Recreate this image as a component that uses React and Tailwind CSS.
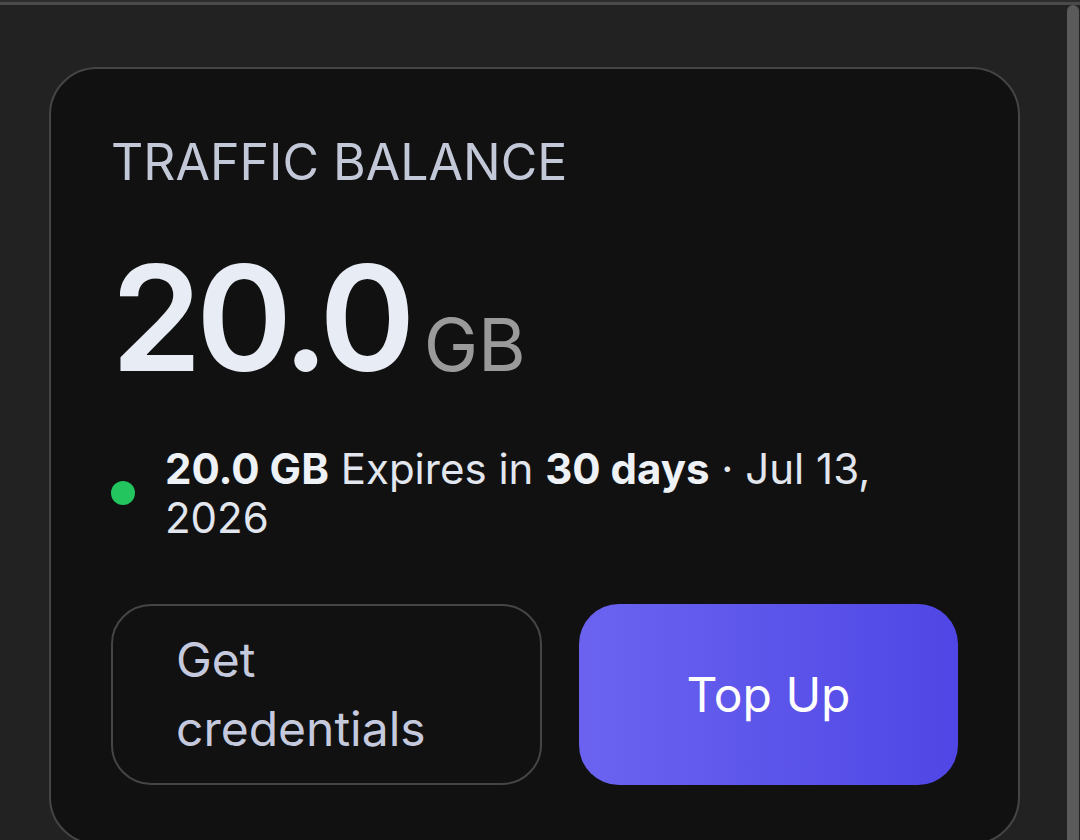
import React from "react";

function StatusLine() {
  return (
    <div className="flex items-center gap-[30px]">
      <span className="w-6 h-6 shrink-0 rounded-full bg-[#22c55e]" />
      <p className="text-[42px] leading-[49px] text-[#e2e6ee]">
        <span className="font-bold text-[#eef1f6]">20.0 GB</span> Expires in{" "}
        <span className="font-bold text-[#eef1f6]">30 days</span> · Jul 13, 2026
      </p>
    </div>
  );
}

function BalanceCard() {
  return (
    <div className="w-[971px] ml-[49px] mt-[62px] shrink-0 rounded-[48px] border-2 border-[#454545] bg-[#111111] px-[60px] pt-[63px] pb-[58px]">
      <div className="text-[50px] leading-[60px] text-[#c3c8d8]">TRAFFIC BALANCE</div>

      <div className="flex items-baseline mt-[53px]">
        <span className="text-[146px] leading-[146px] font-semibold tracking-[-0.04em] text-[#e8edf5]">
          20.0
        </span>
        <span className="ml-[14px] text-[73px] leading-none text-[#9a9a9a]">GB</span>
      </div>

      <div className="mt-[53px]">
        <StatusLine />
      </div>

      <div className="flex gap-[37px] mt-[62px]">
        <button
          type="button"
          className="w-[431px] rounded-[40px] border-2 border-[#454545] px-[63px] pt-[19px] pb-[20px] text-left text-[48px] leading-[69px] text-[#c5c9dd]"
        >
          Get credentials
        </button>
        <button
          type="button"
          className="flex-1 rounded-[40px] bg-gradient-to-r from-[#6b63f0] to-[#4f46e5] text-[48px] text-white"
        >
          Top Up
        </button>
      </div>
    </div>
  );
}

export default function App() {
  return (
    <div
      className="h-[840px] overflow-hidden bg-[#222222] flex flex-col"
      style={{ fontFamily: "Inter, 'Noto Sans', sans-serif" }}
    >
      <div className="h-[2px] bg-[#2c2c2c]" />
      <div className="h-[3px] bg-[#4a4a4a]" />
      <div className="flex flex-1 min-h-0">
        <div className="flex-1 min-w-0">
          <BalanceCard />
        </div>
        <div className="w-[12px] mr-[1px]">
          <div className="h-full rounded-t-full bg-[#5a5a5a]" />
        </div>
      </div>
    </div>
  );
}
